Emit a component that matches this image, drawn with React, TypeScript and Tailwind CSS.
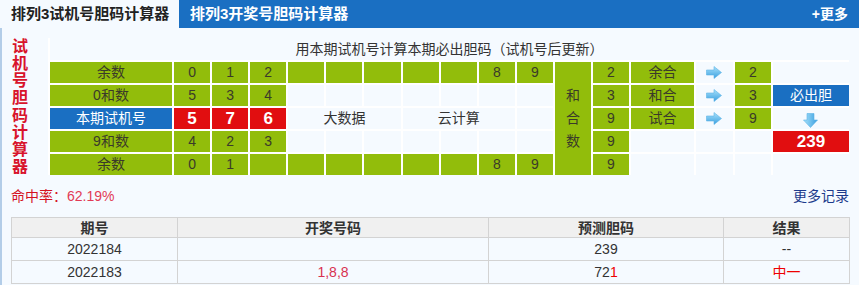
// 排列3试机号胆码计算器
const FONT = "font-['Liberation_Sans','Noto_Sans_CJK_SC',sans-serif]";

function RightArrow() {
  return (
    <svg width="16" height="13" viewBox="0 0 16 13">
      <defs>
        <linearGradient id="ra" x1="0" y1="0" x2="0" y2="1">
          <stop offset="0" stopColor="#a8e2fb" />
          <stop offset="1" stopColor="#3a9fe0" />
        </linearGradient>
      </defs>
      <path d="M0.5 4 H8 V0.5 L15.5 6.5 L8 12.5 V9 H0.5 Z" fill="url(#ra)" stroke="#5cb4e6" strokeWidth="0.6" />
    </svg>
  );
}

function DownArrow() {
  return (
    <svg width="15" height="15" viewBox="0 0 15 15">
      <defs>
        <linearGradient id="da" x1="0" y1="0" x2="1" y2="0">
          <stop offset="0" stopColor="#a8e2fb" />
          <stop offset="1" stopColor="#3a9fe0" />
        </linearGradient>
      </defs>
      <path d="M4 0.5 H11 V7 H14.5 L7.5 14.5 L0.5 7 H4 Z" fill="url(#da)" stroke="#5cb4e6" strokeWidth="0.6" />
    </svg>
  );
}

// 绿色格子
function G({ children, className = "" }: { children?: React.ReactNode; className?: string }) {
  return (
    <div className={`flex items-center justify-center bg-[#92bd0b] text-[14px] text-[#3a3a2a] ${className}`}>
      {children}
    </div>
  );
}

// 空白格子
function E({ children, className = "" }: { children?: React.ReactNode; className?: string }) {
  return (
    <div className={`flex items-center justify-center bg-[#f5faff] text-[14px] text-[#333] ${className}`}>
      {children}
    </div>
  );
}

function Red({ children, className = "" }: { children?: React.ReactNode; className?: string }) {
  return (
    <div className={`flex items-center justify-center bg-[#e10e10] text-[17px] font-bold text-white ${className}`}>
      {children}
    </div>
  );
}

function Blue({ children }: { children?: React.ReactNode }) {
  return (
    <div className="flex items-center justify-center bg-[#1a6fc2] text-[14px] text-white">{children}</div>
  );
}

const TITLE_CHARS = "试机号胆码计算器".split("");

export default function App() {
  return (
    <div className={`h-[285px] w-[859px] overflow-hidden bg-[#f5faff] ${FONT}`}>
      {/* 标签栏 */}
      <div className="flex h-[28px]">
        <div className="flex w-[179px] items-center pl-[11px] text-[15px] font-bold text-[#222]">
          排列3试机号胆码计算器
        </div>
        <div className="flex flex-1 items-center justify-between bg-[#1a6fc2] pl-[11px] pr-[11px] text-white">
          <span className="text-[15px] font-bold">排列3开奖号胆码计算器</span>
          <span className="text-[14px] font-bold">+更多</span>
        </div>
      </div>

      <div className="h-[257px] border-l-[2px] border-[#b3cde8] pl-[9px] pt-[10px]">
        {/* 计算器表格 */}
        <div className="grid w-[838px] grid-cols-[37px_122px_repeat(10,36.1px)_36px_36px_63px_37px_36px_76px] grid-rows-[22px_repeat(5,21px)] gap-[2px] bg-white">
          <div className="row-span-6 flex flex-col justify-center bg-[#f5faff] pl-px">
            {TITLE_CHARS.map((c) => (
              <span key={c} className="block text-[16px] leading-[17.25px] font-bold text-[#d8132b]">
                {c}
              </span>
            ))}
          </div>
          <E className="col-span-17">用本期试机号计算本期必出胆码（试机号后更新）</E>

          {/* 第一行 */}
          <G>余数</G>
          <G>0</G>
          <G>1</G>
          <G>2</G>
          <G />
          <G />
          <G />
          <G />
          <G />
          <G>8</G>
          <G>9</G>
          <G className="row-span-5 flex-col leading-[23px]">
            <span>和</span>
            <span>合</span>
            <span>数</span>
          </G>
          <G>2</G>
          <G>余合</G>
          <E><RightArrow /></E>
          <G>2</G>
          <E />

          {/* 第二行 */}
          <G>0和数</G>
          <G>5</G>
          <G>3</G>
          <G>4</G>
          <E />
          <E />
          <E />
          <E />
          <E />
          <E />
          <E />
          <G>3</G>
          <G>和合</G>
          <E><RightArrow /></E>
          <G>3</G>
          <Blue>必出胆</Blue>

          {/* 第三行 */}
          <Blue>本期试机号</Blue>
          <Red>5</Red>
          <Red>7</Red>
          <Red>6</Red>
          <E className="col-span-3">大数据</E>
          <E className="col-span-3">云计算</E>
          <E />
          <G>9</G>
          <G>试合</G>
          <E><RightArrow /></E>
          <G>9</G>
          <E className="items-end pb-[1px]"><DownArrow /></E>

          {/* 第四行 */}
          <G>9和数</G>
          <G>4</G>
          <G>2</G>
          <G>3</G>
          <E />
          <E />
          <E />
          <E />
          <E />
          <E />
          <E />
          <G>9</G>
          <E />
          <E />
          <E />
          <Red>239</Red>

          {/* 第五行 */}
          <G>余数</G>
          <G>0</G>
          <G>1</G>
          <G />
          <G />
          <G />
          <G />
          <G />
          <G />
          <G>8</G>
          <G>9</G>
          <G>9</G>
          <E />
          <E />
          <E />
          <E />
        </div>

        {/* 命中率 */}
        <div className="mt-[13px] flex w-[838px] items-center justify-between text-[14px] leading-[16px]">
          <span className="text-[#d4121e]">
            命中率：<span className="text-[#e23a55]">62.19%</span>
          </span>
          <span className="text-[#1c3a8c]">更多记录</span>
        </div>

        {/* 历史记录 */}
        <table className="mt-[13px] w-[838px] table-fixed border-collapse text-center text-[14px] text-[#333]">
          <colgroup>
            <col className="w-[166px]" />
            <col className="w-[311px]" />
            <col className="w-[235px]" />
            <col className="w-[126px]" />
          </colgroup>
          <thead>
            <tr className="h-[20px] bg-[#f0f0f0] font-bold">
              <th className="border border-[#d3d3d3] leading-[18px]">期号</th>
              <th className="border border-[#d3d3d3] leading-[18px]">开奖号码</th>
              <th className="border border-[#d3d3d3] leading-[18px]">预测胆码</th>
              <th className="border border-[#d3d3d3] leading-[18px]">结果</th>
            </tr>
          </thead>
          <tbody>
            <tr className="h-[23px]">
              <td className="border border-[#d3d3d3]">2022184</td>
              <td className="border border-[#d3d3d3]"></td>
              <td className="border border-[#d3d3d3]">239</td>
              <td className="border border-[#d3d3d3]">--</td>
            </tr>
            <tr className="h-[23px]">
              <td className="border border-[#d3d3d3]">2022183</td>
              <td className="border border-[#d3d3d3] text-[#d8314f]">1,8,8</td>
              <td className="border border-[#d3d3d3]">
                72<span className="text-[#e00]">1</span>
              </td>
              <td className="border border-[#d3d3d3] text-[#e00]">中一</td>
            </tr>
          </tbody>
        </table>
      </div>
    </div>
  );
}
